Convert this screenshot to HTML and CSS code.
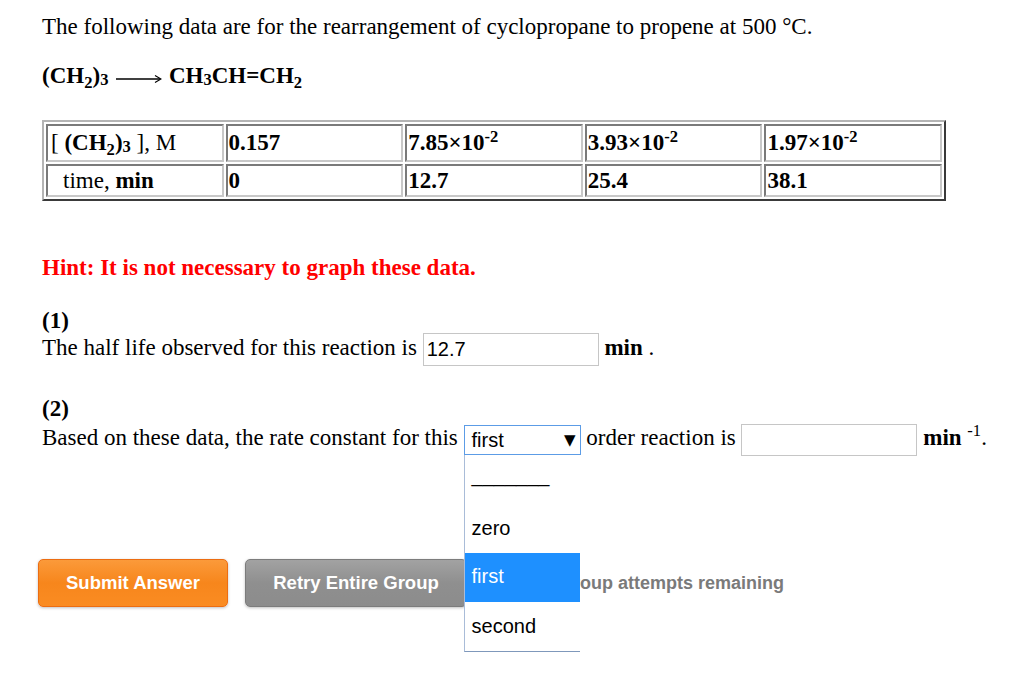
FILE: index.html
```html
<!DOCTYPE html>
<html>
<head>
<meta charset="utf-8">
<link rel="stylesheet" href="styles.css">
</head>
<body>
<div class="page">
  <p class="intro">The following data are for the rearrangement of cyclopropane to propene at 500 °C.</p>
  <p class="equation"><b>(CH<sub class="s2">2</sub>)<sub class="s3">3</sub></b> <svg class="arrow" width="46" height="10" viewBox="0 0 46 10"><line x1="0" y1="5" x2="44" y2="5" stroke="#000" stroke-width="1.3"/><path d="M39 1.5 L45 5 L39 8.5" fill="none" stroke="#000" stroke-width="1.2"/></svg> <b>CH<sub class="s3">3</sub>CH=CH<sub class="s2">2</sub></b></p>

  <table class="data">
    <tr class="r1">
      <td>[ <b>(CH<sub class="s2">2</sub>)<sub class="s3">3</sub></b> ], M</td>
      <td><b>0.157</b></td>
      <td><b>7.85×10<sup>-2</sup></b></td>
      <td><b>3.93×10<sup>-2</sup></b></td>
      <td><b>1.97×10<sup>-2</sup></b></td>
    </tr>
    <tr class="r2">
      <td class="indent">time, <b>min</b></td>
      <td><b>0</b></td>
      <td><b>12.7</b></td>
      <td><b>25.4</b></td>
      <td><b>38.1</b></td>
    </tr>
  </table>

  <p class="hint">Hint: It is not necessary to graph these data.</p>

  <p class="qlabel q1">(1)</p>
  <p class="qline">The half life observed for this reaction is <span class="field">12.7</span> <b>min</b> .</p>

  <p class="qlabel q2">(2)</p>
  <p class="qline line2">Based on these data, the rate constant for this <span class="select"><span class="sel-box"><span class="sel-val">first</span><span class="sel-arrow">▼</span></span><span class="sel-list"><span class="opt blank">_______</span><span class="opt">zero</span><span class="opt active">first</span><span class="opt">second</span></span></span> order reaction is <span class="field wide"></span> <b>min</b> <sup class="unit">-1</sup>.</p>

  <div class="actions">
    <span class="btn submit">Submit Answer</span>
    <span class="btn retry">Retry Entire Group</span>
    <span class="attempts">5 more group attempts remaining</span>
  </div>
</div>
</body>
</html>
```

FILE: styles.css
```css
html, body {
  margin: 0;
  padding: 0;
  background: #fff;
}

.page {
  box-sizing: border-box;
  min-height: 677px;
  padding: 14px 0 0 42px;
  font-family: "Liberation Serif", "Times New Roman", serif;
  font-size: 23px;
  color: #000;
}

p {
  margin: 0;
  line-height: 26px;
}

sub, sup {
  line-height: 0;
  font-size: 0.72em;
}
sub.s2 { vertical-align: -0.3em; }
sub.s3 { vertical-align: -0.12em; }

.equation {
  margin-top: 23px;
}

.arrow {
  vertical-align: -1px;
  margin: 0 1px 0 2px;
}

.data {
  margin-top: 31px;
  width: 904px;
  table-layout: fixed;
  border-collapse: separate;
  border-spacing: 2px;
  border: 2px solid;
  border-color: #b4b4b4 #3a3a3a #3a3a3a #b4b4b4;
}

.data td {
  border: 2px solid;
  border-color: #7a7a7a #c8c8c8 #c8c8c8 #7a7a7a;
  padding: 0 1px;
  line-height: 24px;
  vertical-align: middle;
  text-align: left;
}
.data .r1 td { height: 34px; }
.data .r2 td { height: 29px; }
.data .r1 td:first-child { padding-left: 3px; }
.data .indent { padding-left: 15px; }
.data sup { vertical-align: 0.5em; }

.hint {
  margin-top: 54px;
  color: #ff0000;
  font-weight: bold;
}

.qlabel {
  font-weight: bold;
  line-height: 24px;
}
.q1 { margin-top: 28px; }
.q2 { margin-top: 31px; }

.qline {
  line-height: 24px;
}
.line2 {
  padding-top: 3px;
}

.field {
  display: inline-block;
  box-sizing: border-box;
  width: 176px;
  height: 33px;
  border: 1px solid #c6c6c6;
  vertical-align: middle;
  font-family: "Liberation Sans", Arial, sans-serif;
  font-size: 20px;
  line-height: 31px;
  padding-left: 3px;
}
.field.wide {
  height: 32px;
}

.select {
  position: relative;
  display: inline-block;
  vertical-align: middle;
}

.sel-box {
  display: flex;
  align-items: center;
  justify-content: space-between;
  box-sizing: border-box;
  width: 117px;
  height: 30px;
  border: 1px solid #5c9ce6;
  padding: 0 4px 0 7px;
  font-family: "Liberation Sans", Arial, sans-serif;
  font-size: 20px;
  line-height: 28px;
}

.sel-arrow {
  font-size: 15px;
  font-family: "DejaVu Sans", sans-serif;
}

.sel-list {
  position: absolute;
  top: 30px;
  left: 0;
  width: 116px;
  display: block;
  background: #fff;
  border-left: 1px solid #a9bcd8;
  border-bottom: 1px solid #7f98bb;
  box-sizing: border-box;
  font-family: "Liberation Sans", Arial, sans-serif;
  font-size: 20px;
  z-index: 5;
}

.opt {
  display: block;
  height: 49px;
  line-height: 49px;
  padding-left: 7px;
  color: #000;
}
.opt.blank {
  line-height: 40px;
}
.opt.active {
  background: #1e90ff;
  color: #fff;
  line-height: 46px;
}

.unit {
  font-size: 0.72em;
  vertical-align: 0.55em;
}

.actions {
  margin-top: 103px;
  margin-left: -4px;
  display: flex;
  align-items: center;
  font-family: "Liberation Sans", Arial, sans-serif;
}

.btn {
  box-sizing: border-box;
  height: 48px;
  display: flex;
  align-items: center;
  justify-content: center;
  padding: 0 26px;
  border-radius: 5px;
  color: #fff;
  font-weight: bold;
  font-size: 18.5px;
}

.submit {
  width: 190px;
  background: linear-gradient(#fb9a3a, #f7861c 50%, #fa8c22);
  border: 1px solid #ec6d12;
  box-shadow: 0 1px 3px rgba(0,0,0,0.25);
}

.retry {
  width: 222px;
  margin-left: 17px;
  background: linear-gradient(#a2a2a2, #8f8f8f 50%, #8c8c8c);
  border: 1px solid #7c7c7c;
  box-shadow: 0 1px 3px rgba(0,0,0,0.25);
}

.attempts {
  margin-left: 31px;
  color: #7a7a7a;
  font-weight: bold;
  font-size: 18px;
}
```
